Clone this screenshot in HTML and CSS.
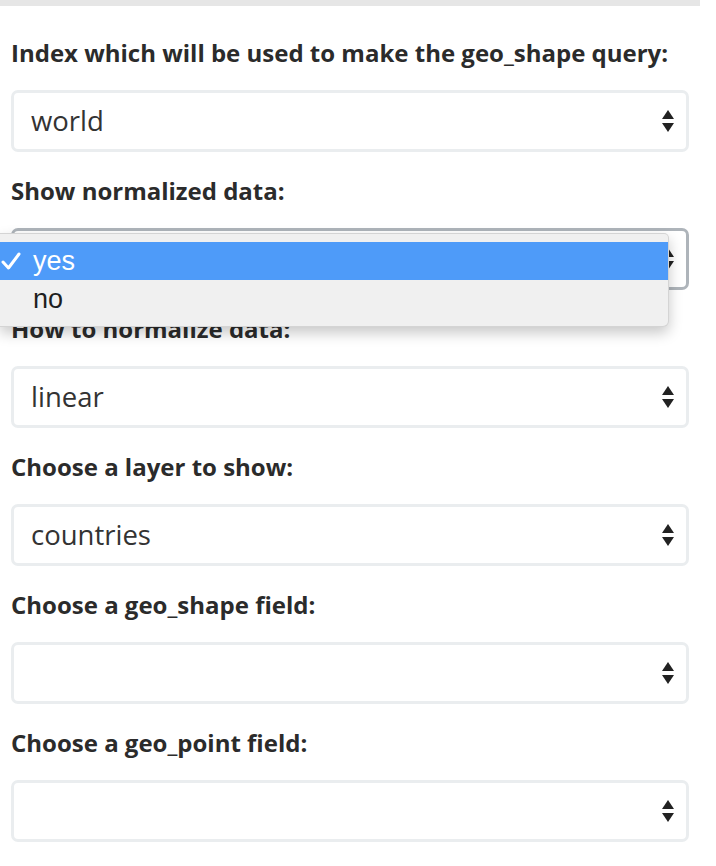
FILE: index.html
```html
<!DOCTYPE html>
<html>
<head>
<meta charset="utf-8">
<link rel="stylesheet" href="styles.css">
</head>
<body>
<div class="topbar"></div>
<div class="form">
  <div class="group">
    <label class="label">Index which will be used to make the geo_shape query:</label>
    <div class="select"><span class="value">world</span><span class="arrows"><span class="up"></span><span class="down"></span></span></div>
  </div>
  <div class="group">
    <label class="label">Show normalized data:</label>
    <div class="select focused"><span class="value">yes</span><span class="arrows"><span class="up"></span><span class="down"></span></span>
    </div>
  </div>
  <div class="group">
    <label class="label">How to normalize data:</label>
    <div class="select"><span class="value">linear</span><span class="arrows"><span class="up"></span><span class="down"></span></span></div>
  </div>
  <div class="group">
    <label class="label">Choose a layer to show:</label>
    <div class="select"><span class="value">countries</span><span class="arrows"><span class="up"></span><span class="down"></span></span></div>
  </div>
  <div class="group">
    <label class="label">Choose a geo_shape field:</label>
    <div class="select"><span class="value"></span><span class="arrows"><span class="up"></span><span class="down"></span></span></div>
  </div>
  <div class="group">
    <label class="label">Choose a geo_point field:</label>
    <div class="select"><span class="value"></span><span class="arrows"><span class="up"></span><span class="down"></span></span></div>
  </div>
</div>
<div class="menu">
  <div class="option selected"><svg class="check" width="20" height="18" viewBox="0 0 20 18"><path d="M2 10 L7.5 16 L18 2" fill="none" stroke="#ffffff" stroke-width="3" stroke-linecap="round" stroke-linejoin="round"/></svg>yes</div>
  <div class="option">no</div>
</div>
</body>
</html>
```
FILE: styles.css
```css
html, body {
  margin: 0;
  padding: 0;
  background: #ffffff;
}
body {
  width: 716px;
  height: 866px;
  overflow: hidden;
  position: relative;
  font-family: "Open Sans", "DejaVu Sans", sans-serif;
  color: #333333;
}
.topbar {
  width: 700px;
  height: 6px;
  background: #e6e6e6;
}
.form {
  padding: 33px 0 0 11px;
  width: 678px;
}
.group {
  margin-bottom: 25px;
}
.label {
  display: block;
  font-size: 24px;
  font-weight: 700;
  line-height: 28px;
  color: #2b2b2b;
  margin-bottom: 23px;
  white-space: nowrap;
}
.select {
  box-sizing: border-box;
  height: 62px;
  border: 3px solid #eaedef;
  border-radius: 7px;
  background: #ffffff;
  display: flex;
  align-items: center;
  padding: 0 12px 0 17px;
}
.select.focused {
  border-color: #aeb4ba;
}
.value {
  flex: 1;
  font-size: 27.5px;
  line-height: 36px;
  color: #333333;
}
.arrows {
  display: flex;
  flex-direction: column;
  align-items: center;
  gap: 4px;
}
.up {
  width: 0;
  height: 0;
  border-left: 6px solid transparent;
  border-right: 6px solid transparent;
  border-bottom: 9px solid #222222;
}
.down {
  width: 0;
  height: 0;
  border-left: 6px solid transparent;
  border-right: 6px solid transparent;
  border-top: 9px solid #222222;
}
.menu {
  position: absolute;
  left: 0;
  top: 233px;
  width: 669px;
  box-sizing: border-box;
  padding: 8px 0 8px 0;
  background: #f0f0f0;
  border-radius: 0 5px 6px 0;
  border: 1px solid #d4d4d4;
  border-left: none;
  box-shadow: 0 6px 14px rgba(0, 0, 0, 0.22);
  font-family: "Liberation Sans", Arial, sans-serif;
  font-size: 27px;
}
.option {
  height: 38px;
  line-height: 38px;
  padding-left: 33px;
  color: #1e1e1e;
  position: relative;
}
.option.selected {
  background: #4e9bf9;
  color: #ffffff;
}
.check {
  position: absolute;
  left: 1px;
  top: 10px;
}
```
